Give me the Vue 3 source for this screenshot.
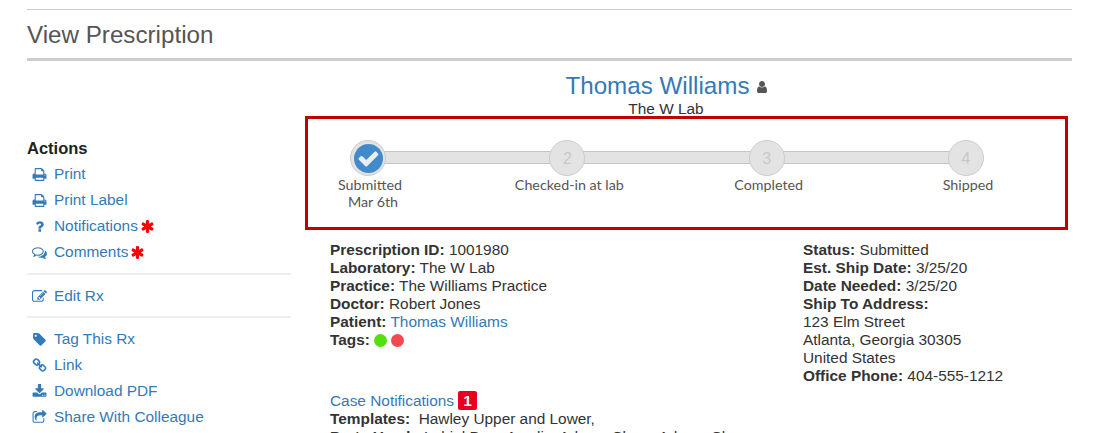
<script setup>
const P = {
  print: 'M448 1536h896v-256h-896v256zm0-640h896v-384h-160q-40 0-68-28t-28-68v-160h-640v640zm1152 64q0-26-19-45t-45-19-45 19-19 45 19 45 45 19 45-19 19-45zm128 0v416q0 13-9.5 22.5t-22.5 9.5h-224v160q0 40-28 68t-68 28h-960q-40 0-68-28t-28-68v-160h-224q-13 0-22.5-9.5t-9.5-22.5v-416q0-79 56.5-135.5t135.5-56.5h64v-544q0-40 28-68t68-28h672q40 0 88 20t76 48l152 152q28 28 48 76t20 88v256h64q79 0 135.5 56.5t56.5 135.5z',
  question: 'M1088 1256v240q0 16-12 28t-28 12h-240q-16 0-28-12t-12-28v-240q0-16 12-28t28-12h240q16 0 28 12t12 28zm316-600q0 54-15.5 101t-35 76.5-55 59.5-57.5 43.5-61 35.5q-41 23-68.5 65t-27.5 67q0 17-12 32.5t-28 15.5h-240q-15 0-25.5-18.5t-10.5-37.5v-45q0-83 65-156.5t143-108.5q59-27 84-56t25-76q0-42-46.5-74t-107.5-32q-65 0-108 29-35 25-107 115-13 16-31 16-12 0-25-8l-164-125q-13-10-15.5-25t5.5-28q160-266 464-266 80 0 161 31t146 83 106 127.5 41 158.5z',
  comments: 'M704 384q-153 0-286 52t-211.5 141-78.5 191q0 82 53 158t149 132l97 56-35 84q34-20 62-39l44-31 53 10q78 14 153 14 153 0 286-52t211.5-141 78.5-191-78.5-191-211.5-141-286-52zm0-128q191 0 353.5 68.5t256.5 186.5 94 257-94 257-256.5 186.5-353.5 68.5q-86 0-176-16-124 88-278 128-36 9-86 16h-3q-11 0-20.5-8t-11.5-21q-1-3-1-6.5t.5-6.5 2-6l2.5-5 3.5-5.5 4-5 4.5-5 4-4.5q5-6 23-25t26-29.5 22.5-29 25-38.5 20.5-44q-124-72-195-177t-71-224q0-139 94-257t256.5-186.5 353.5-68.5zm822 1169q10 24 20.5 44t25 38.5 22.5 29 26 29.5 23 25q1 1 4 4.5t4.5 5 4 5 3.5 5.5l2.5 5 2 6 .5 6.5-1 6.5q-3 14-13 22t-22 7q-50-7-86-16-154-40-278-128-90 16-176 16-271 0-472-132 58 4 88 4 161 0 309-45t264-129q125-92 192-212t67-254q0-77-23-152 129 71 204 178t75 230q0 120-71 224.5t-195 176.5z',
  edit: 'M888 1184l116-116-152-152-116 116v56h96v96h56zm440-720q-16-16-33 1l-350 350q-17 17-1 33t33-1l350-350q17-17 1-33zm80 594v190q0 119-84.5 203.5t-203.5 84.5h-832q-119 0-203.5-84.5t-84.5-203.5v-832q0-119 84.5-203.5t203.5-84.5h832q63 0 117 25 15 7 18 23 3 17-9 29l-49 49q-14 14-32 8-23-6-45-6h-832q-66 0-113 47t-47 113v832q0 66 47 113t113 47h832q66 0 113-47t47-113v-126q0-13 9-22l64-64q15-15 35-7t20 29zm-96-738l288 288-672 672h-288v-288zm444 132l-92 92-288-288 92-92q28-28 68-28t68 28l152 152q28 28 28 68t-28 68z',
  tag: 'M576 448q0-53-37.5-90.5t-90.5-37.5-90.5 37.5-37.5 90.5 37.5 90.5 90.5 37.5 90.5-37.5 37.5-90.5zm1067 576q0 53-37 90l-491 492q-39 37-91 37-53 0-90-37l-715-716q-38-37-64.5-101t-26.5-117v-416q0-52 38-90t90-38h416q53 0 117 26.5t102 64.5l715 714q37 39 37 91z',
  link: 'M1520 1216q0-40-28-68l-208-208q-28-28-68-28-42 0-72 32 3 3 19 18.5t21.5 21.5 15 19 13 25.5 3.5 27.5q0 40-28 68t-68 28q-15 0-27.5-3.5t-25.5-13-19-15-21.5-21.5-18.5-19q-33 31-33 73 0 40 28 68l206 207q27 27 68 27 40 0 68-26l147-146q28-28 28-67zm-703-705q0-40-28-68l-206-207q-28-28-68-28-39 0-68 27l-147 146q-28 28-28 67 0 40 28 68l208 208q27 27 68 27 42 0 72-31-3-3-19-18.5t-21.5-21.5-15-19-13-25.5-3.5-27.5q0-40 28-68t68-28q15 0 27.5 3.5t25.5 13 19 15 21.5 21.5 18.5 19q33-31 33-73zm895 705q0 120-85 203l-147 146q-83 83-203 83-121 0-204-85l-206-207q-83-83-83-203 0-123 88-209l-88-88q-86 88-208 88-120 0-204-84l-208-208q-84-84-84-204t85-203l147-146q83-83 203-83 121 0 204 85l206 207q83 83 83 203 0 123-88 209l88 88q86-88 208-88 120 0 204 84l208 208q84 84 84 204z',
  download: 'M1344 1344q0-26-19-45t-45-19-45 19-19 45 19 45 45 19 45-19 19-45zm256 0q0-26-19-45t-45-19-45 19-19 45 19 45 45 19 45-19 19-45zm128-224v320q0 40-28 68t-68 28h-1472q-40 0-68-28t-28-68v-320q0-40 28-68t68-28h465l135 136q58 56 136 56t136-56l136-136h464q40 0 68 28t28 68zm-325-569q17 41-14 70l-448 448q-18 19-45 19t-45-19l-448-448q-31-29-14-70 17-39 59-39h256v-448q0-26 19-45t45-19h256q26 0 45 19t19 45v448h256q42 0 59 39z',
  share: 'M1472 989v259q0 119-84.5 203.5t-203.5 84.5h-832q-119 0-203.5-84.5t-84.5-203.5v-832q0-119 84.5-203.5t203.5-84.5h255q13 0 22.5 9.5t9.5 22.5q0 27-26 32-77 26-133 60-10 4-16 4h-112q-66 0-113 47t-47 113v832q0 66 47 113t113 47h832q66 0 113-47t47-113v-214q0-19 18-29 28-13 54-37 16-16 35-8 21 9 21 29zm237-496l-384 384q-18 19-45 19-12 0-25-5-39-17-39-59v-192h-160q-323 0-438 131-119 137-74 473 3 23-20 34-8 2-12 2-16 0-26-13-10-14-21-31t-39.5-68.5-49.5-99.5-38.5-114-17.5-122q0-49 3.5-91t14-90 28-88 47-81.5 68.5-74 94.5-61.5 124.5-48.5 159.5-30.5 196.5-11h160v-192q0-42 39-59 13-5 25-5 26 0 45 19l384 384q19 19 19 45t-19 45z',
  user: 'M1536 1399q0 109-62.5 187t-150.5 78h-854q-88 0-150.5-78t-62.5-187q0-85 8.5-160.5t31.5-152 58.5-131 94-89 134.5-34.5q131 128 313 128t313-128q76 0 134.5 34.5t94 89 58.5 131 31.5 152 8.5 160.5zm-256-887q0 159-112.5 271.5t-271.5 112.5-271.5-112.5-112.5-271.5 112.5-271.5 271.5-112.5 271.5 112.5 112.5 271.5z',
  asterisk: 'M1546 1050q46 26 59.5 77.5t-12.5 97.5l-64 110q-26 46-77.5 59.5t-97.5-12.5l-266-153v307q0 52-38 90t-90 38h-128q-52 0-90-38t-38-90v-307l-266 153q-46 26-97.5 12.5t-77.5-59.5l-64-110q-26-46-12.5-97.5t59.5-77.5l266-154-266-154q-46-26-59.5-77.5t12.5-97.5l64-110q26-46 77.5-59.5t97.5 12.5l266 153v-307q0-52 38-90t90-38h128q52 0 90 38t38 90v307l266-153q46-26 97.5-12.5t77.5 59.5l64 110q26 46 12.5 97.5t-59.5 77.5l-266 154z',
  check: 'M1671 566q0 40-28 68l-724 724-136 136q-28 28-68 28t-68-28l-136-136-362-362q-28-28-28-68t28-68l136-136q28-28 68-28t68 28l294 295 656-657q28-28 68-28t68 28l136 136q28 28 28 68z'
}
const groups = [
  [
    { icon: 'print', label: 'Print' },
    { icon: 'print', label: 'Print Label' },
    { icon: 'question', label: 'Notifications', flag: true },
    { icon: 'comments', label: 'Comments', flag: true }
  ],
  [{ icon: 'edit', label: 'Edit Rx' }],
  [
    { icon: 'tag', label: 'Tag This Rx' },
    { icon: 'link', label: 'Link' },
    { icon: 'download', label: 'Download PDF' },
    { icon: 'share', label: 'Share With Colleague' }
  ]
]
const steps = [
  { n: 1, label: 'Submitted', date: 'Mar 6th', done: true },
  { n: 2, label: 'Checked-in at lab' },
  { n: 3, label: 'Completed' },
  { n: 4, label: 'Shipped' }
]
const leftRows = [
  ['Prescription ID:', '1001980'],
  ['Laboratory:', 'The W Lab'],
  ['Practice:', 'The Williams Practice'],
  ['Doctor:', 'Robert Jones']
]
</script>

<template>
  <div class="page">
    <div class="top-rule"></div>
    <h1 class="title">View Prescription</h1>
    <div class="main">
      <aside class="side">
        <h3 class="side-head">Actions</h3>
        <div v-for="(g, i) in groups" :key="i" class="group">
          <a v-for="it in g" :key="it.label" class="item" href="#">
            <svg class="ic" viewBox="0 0 1792 1792"><path :d="P[it.icon]" /></svg>
            <span>{{ it.label }}</span>
            <svg v-if="it.flag" class="flag" viewBox="0 0 1792 1792"><path :d="P.asterisk" /></svg>
          </a>
        </div>
      </aside>
      <section class="content">
        <header class="who">
          <div class="who-name">
            <a href="#">Thomas Williams</a>
            <svg class="who-ic" viewBox="0 0 1792 1792"><path :d="P.user" /></svg>
          </div>
          <div class="who-lab">The W Lab</div>
        </header>
        <div class="tracker">
          <div class="steps">
            <div class="track"></div>
            <div v-for="s in steps" :key="s.n" class="step">
              <div class="dot" :class="{ done: s.done }">
                <span v-if="s.done" class="dot-fill">
                  <svg viewBox="0 0 1792 1792"><path :d="P.check" /></svg>
                </span>
                <span v-else>{{ s.n }}</span>
              </div>
              <div class="step-label">{{ s.label }}</div>
              <div v-if="s.date" class="step-date">{{ s.date }}</div>
            </div>
          </div>
        </div>
        <div class="details">
          <div class="col-left">
            <div v-for="r in leftRows" :key="r[0]"><b>{{ r[0] }}</b> {{ r[1] }}</div>
            <div><b>Patient:</b> <a href="#">Thomas Williams</a></div>
            <div class="tags"><b>Tags:</b><i class="tag green"></i><i class="tag red"></i></div>
            <div class="notes"><a href="#">Case Notifications</a><span class="badge">1</span></div>
            <div><b>Templates:</b>&nbsp; Hawley Upper and Lower,</div>
            <div class="nowrap"><b>Parts Used:</b>&nbsp; Labial Bow, Acrylic, Adams Clasp, Adams Clasp</div>
          </div>
          <div class="col-right">
            <div><b>Status:</b> Submitted</div>
            <div><b>Est. Ship Date:</b> 3/25/20</div>
            <div><b>Date Needed:</b> 3/25/20</div>
            <div><b>Ship To Address:</b></div>
            <div>123 Elm Street</div>
            <div>Atlanta, Georgia 30305</div>
            <div>United States</div>
            <div><b>Office Phone:</b> 404-555-1212</div>
          </div>
        </div>
      </section>
    </div>
  </div>
</template>

<style>
html, body { margin: 0; background: #fff; overflow: hidden; }
</style>

<style scoped>
.page {
  box-sizing: border-box;
  height: 433px;
  overflow: hidden;
  padding: 9px 30px 0 27px;
  font-family: "Liberation Sans", Arial, sans-serif;
  font-size: 15.4px;
  line-height: 18px;
  color: #333;
}
a { color: #337ab7; text-decoration: none; }
.top-rule { height: 1px; background: #ccc; }
.title {
  margin: 0;
  height: 51px;
  box-sizing: border-box;
  padding-top: 11px;
  font-size: 24.2px;
  line-height: 27px;
  font-weight: 400;
  color: #555;
  border-bottom: 3px solid #ccc;
}
.main { display: flex; }
.side { width: 264px; flex: none; margin-right: 14px; padding-top: 77px; }
.side-head { margin: 0 0 3px; font-size: 16.5px; line-height: 20px; font-weight: 700; color: #222; }
.group { padding-bottom: 7px; margin-bottom: 8px; border-bottom: 2px solid #eee; }
.group:first-of-type { padding-bottom: 8px; }
.group:last-child { border-bottom: 0; }
.item { display: flex; align-items: center; height: 26px; }
.ic { width: 15px; height: 15px; margin: 0 7px 0 5px; fill: #337ab7; flex: none; }
.flag { width: 15px; height: 15px; margin-left: 2px; fill: #f00; }
.content { flex: 1; min-width: 0; }
.who { padding: 11px 45px 0 0; text-align: center; }
.who-name { padding-left: 2px; font-size: 24.2px; line-height: 27px; }
.who-ic { width: 14px; height: 14px; margin-left: 5px; fill: #555; }
.who-lab { margin-top: 1px; line-height: 18px; }
.tracker {
  box-sizing: border-box;
  width: 763px;
  height: 114px;
  margin-top: -2px;
  padding: 21px 47px 0 12px;
  border: 3px solid #c00000;
}
.steps { position: relative; display: flex; justify-content: space-between; }
.track {
  position: absolute;
  left: 48px;
  top: 11px;
  width: 598px;
  height: 13px;
  box-sizing: border-box;
  background: #e3e3e4;
  border-top: 1px solid #c4c4c4;
  border-bottom: 1px solid #c4c4c4;
}
.step {
  position: relative;
  width: 100px;
  display: flex;
  flex-direction: column;
  align-items: center;
  font-family: Lato, sans-serif;
  font-size: 14.3px;
  line-height: 17px;
  color: #555;
}
.dot {
  box-sizing: border-box;
  width: 36px;
  height: 36px;
  margin-right: 4px;
  border: 1px solid #ccc;
  border-radius: 50%;
  background: #e3e3e4;
  display: flex;
  align-items: center;
  justify-content: center;
  font-family: "Liberation Sans", sans-serif;
  font-size: 16px;
  color: #c8c8c8;
}
.dot-fill {
  width: 29px;
  height: 29px;
  border-radius: 50%;
  background: #428bca;
  display: flex;
  align-items: center;
  justify-content: center;
}
.dot-fill svg { width: 23px; height: 23px; fill: #e8eef4; }
.step-label { white-space: nowrap; }
.step-date { padding-left: 6px; }
.details { display: flex; margin-top: 11px; padding-left: 25px; }
.col-left { width: 473px; flex: none; }
.nowrap { white-space: nowrap; }
.tags { display: flex; align-items: center; }
.tag { width: 13px; height: 13px; border-radius: 50%; margin-left: 4px; }
.tag.red { background: #f5474f; }
.tag.green { background: #52e010; }
.notes { display: flex; align-items: center; margin-top: 42px; }
.badge {
  box-sizing: border-box;
  width: 19px;
  height: 19px;
  margin-left: 4px;
  border-radius: 2px;
  background: #e8001c;
  color: #fff;
  font-weight: 700;
  text-align: center;
  line-height: 19px;
}
</style>
